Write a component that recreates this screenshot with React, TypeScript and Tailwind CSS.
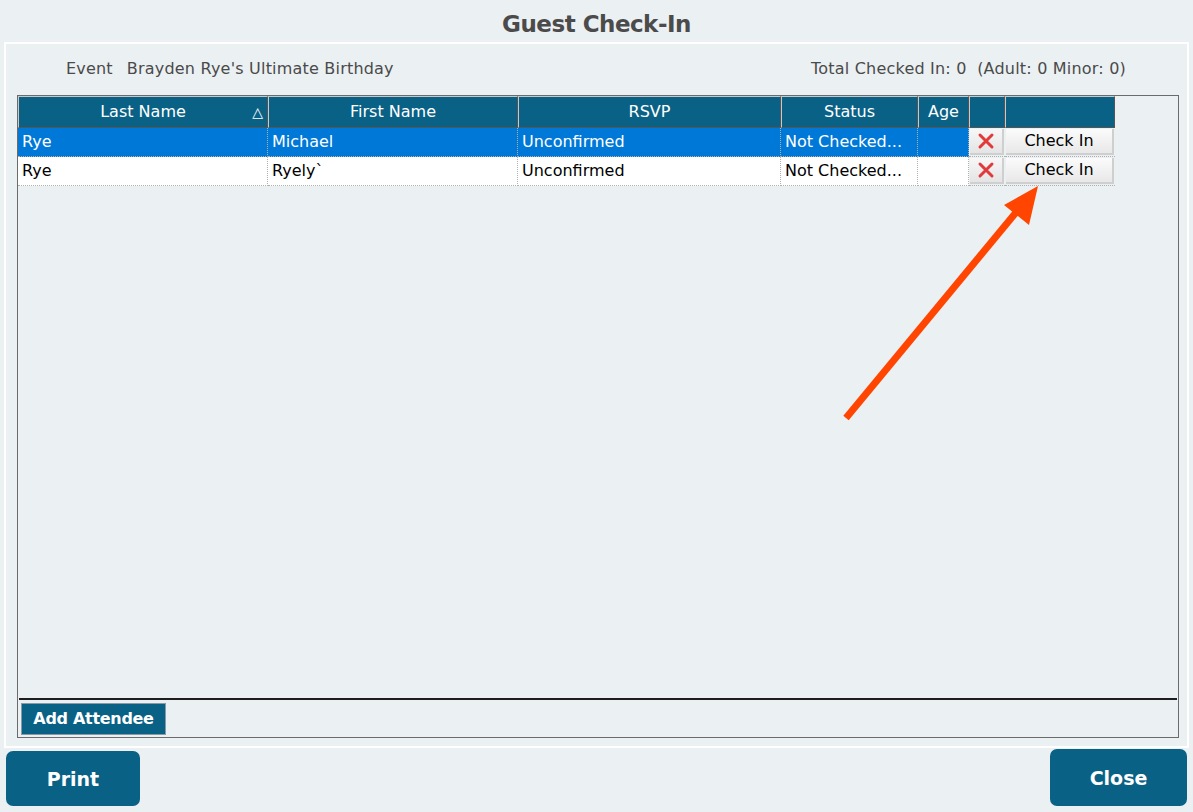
const font = { fontFamily: "'DejaVu Sans', Verdana, sans-serif" };

type Guest = {
  last: string;
  first: string;
  rsvp: string;
  status: string;
  age: string;
  selected: boolean;
};

const guests: Guest[] = [
  { last: "Rye", first: "Michael", rsvp: "Unconfirmed", status: "Not Checked...", age: "", selected: true },
  { last: "Rye", first: "Ryely`", rsvp: "Unconfirmed", status: "Not Checked...", age: "", selected: false },
];

const cols = "grid-cols-[250px_250px_263px_137px_51px_36px_110px]";

const RedX = () => (
  <svg width="18" height="18" viewBox="0 0 18 18">
    <path d="M3 3 L15 15 M15 3 L3 15" stroke="#e23a3a" strokeWidth="3" strokeLinecap="round" />
  </svg>
);

const App = () => {
  return (
    <div className="w-[1193px] h-[812px] bg-[#ebf0f3] flex flex-col overflow-hidden relative" style={font}>
      <div className="h-[42px] flex items-center justify-center pt-[6px] text-[23px] font-bold text-[#4b4b4b] tracking-[-0.5px]">
        Guest Check-In
      </div>
      <div className="mx-1 border-2 border-white h-[706px] flex flex-col">
        <div className="h-[51px] flex items-center justify-between pl-[60px] pr-[61px] pb-[2px] text-[16px] text-[#4a4a4a] tracking-[0.2px]">
          <div className="flex gap-[14px]">
            <span>Event</span>
            <span>Brayden Rye's Ultimate Birthday</span>
          </div>
          <span>Total Checked In: 0&nbsp; (Adult: 0 Minor: 0)</span>
        </div>
        <div className="ml-[11px] mr-[8px] border border-[#6b6b6b] flex-1 flex flex-col">
          <div className="flex-1 flex flex-col">
            <div className={`grid ${cols} w-fit h-[32px] text-white text-[16px]`}>
              {["Last Name", "First Name", "RSVP", "Status", "Age", "", ""].map((h, i) => (
                <div
                  key={i}
                  className="bg-[#0a6186] border-l border-t border-[#c8c8c8] border-r border-r-[#555] border-b border-b-[#555] flex items-center justify-center relative"
                >
                  {h}
                  {i === 0 && <span className="absolute right-[4px] text-[14px]">△</span>}
                </div>
              ))}
            </div>
            {guests.map((g, r) => (
              <div
                key={r}
                className={`grid ${cols} w-fit h-[29px] text-[16px] ${g.selected ? "text-white" : "text-black"}`}
              >
                {[g.last, g.first, g.rsvp, g.status, g.age].map((v, i) => (
                  <div
                    key={i}
                    className={`border-r border-b border-dotted border-[#b0b0b0] flex items-center px-[4px] whitespace-nowrap overflow-hidden ${g.selected ? "bg-[#0078d7]" : "bg-white"}`}
                  >
                    {v}
                  </div>
                ))}
                <div className="bg-[#ebf0f3] border-b border-dotted border-[#b0b0b0] p-[1px]">
                  <div className="h-full bg-gradient-to-b from-[#f7f7f7] to-[#e4e4e4] border-r-2 border-b-2 border-[#cfcfcf] flex items-center justify-center">
                    <RedX />
                  </div>
                </div>
                <div className="bg-[#ebf0f3] border-b border-dotted border-[#b0b0b0] p-[1px]">
                  <div className="h-full bg-gradient-to-b from-[#fbfbfb] to-[#e8e8e8] border-r-2 border-b-2 border-[#cfcfcf] flex items-center justify-center text-black">
                    Check In
                  </div>
                </div>
              </div>
            ))}
          </div>
          <div className="h-[39px] border-t-2 border-[#1e1e1e] mx-[1px] px-[2px] pt-[3px]">
            <button className="h-[32px] w-[145px] bg-[#0a6186] border border-[#8a9aa5] text-white font-bold text-[16px] tracking-[-0.3px]">
              Add Attendee
            </button>
          </div>
        </div>
        <div className="h-[8px]" />
      </div>
      <div className="flex justify-between px-[6px] pt-[3px]">
        <button className="w-[134px] h-[55px] rounded-[7px] bg-[#0a6186] text-white font-bold text-[19px] pt-[2px]">Print</button>
        <button className="w-[137px] h-[57px] -mt-[2px] rounded-[7px] bg-[#0a6186] text-white font-bold text-[19px] pt-[2px]">Close</button>
      </div>
      <svg className="absolute left-0 top-0 pointer-events-none" width="1193" height="812">
        <line x1="846" y1="418" x2="1018" y2="210" stroke="#ff4500" strokeWidth="7" />
        <polygon points="1038,186 1004,205 1029,225" fill="#ff4500" />
      </svg>
    </div>
  );
};

export default App;
